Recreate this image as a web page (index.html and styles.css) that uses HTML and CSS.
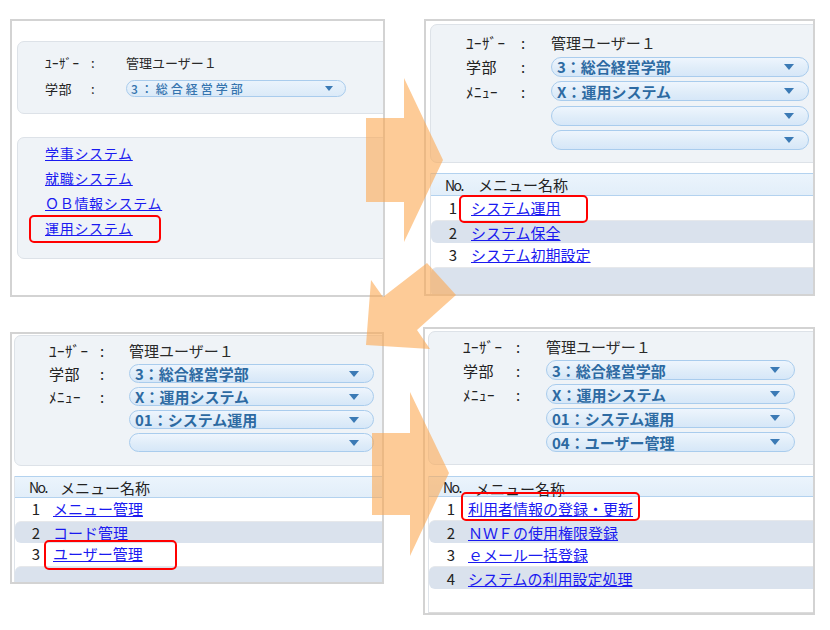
FILE: index.html
```html
<!DOCTYPE html>
<html lang="ja">
<head>
<meta charset="utf-8">
<title>メニュー遷移</title>
<link rel="stylesheet" href="styles.css">
</head>
<body>
<div class="page">
  <div class="band band-top">
    <!-- Panel 1 -->
    <div class="panel p1">
      <div class="card info">
        <span class="lbl">ﾕｰｻﾞｰ</span><span class="colon">:</span><span class="val">管理ユーザー１</span>
        <span class="lbl">学部</span><span class="colon">:</span><div class="sel"><span>3：総合経営学部</span><i class="caret"></i></div>
      </div>
      <div class="card links">
        <a href="#">学事システム</a>
        <a href="#">就職システム</a>
        <a href="#">ＯＢ情報システム</a>
        <span class="hl"><a href="#">運用システム</a></span>
      </div>
    </div>
    <!-- Panel 2 -->
    <div class="panel p2">
      <div class="card info">
        <span class="lbl">ﾕｰｻﾞｰ</span><span class="colon">:</span><span class="val">管理ユーザー１</span>
        <span class="lbl">学部</span><span class="colon">:</span><div class="sel"><span>3：総合経営学部</span><i class="caret"></i></div>
        <span class="lbl">ﾒﾆｭｰ</span><span class="colon">:</span><div class="sel"><span>X：運用システム</span><i class="caret"></i></div>
        <span></span><span></span><div class="sel"><span></span><i class="caret"></i></div>
        <span></span><span></span><div class="sel"><span></span><i class="caret"></i></div>
      </div>
      <div class="tbl">
        <div class="th"><span class="no">No.</span><span>メニュー名称</span></div>
        <div class="tr"><span class="num">1</span><span class="cell"><span class="hl"><a href="#">システム運用</a></span></span></div>
        <div class="tr alt"><span class="num">2</span><span class="cell"><a href="#">システム保全</a></span></div>
        <div class="tr"><span class="num">3</span><span class="cell"><a href="#">システム初期設定</a></span></div>
        <div class="tr alt"><span class="num"></span><span class="cell"></span></div>
      </div>
    </div>
  </div>

  <div class="band band-bottom">
    <!-- Panel 3 -->
    <div class="panel p3">
      <div class="card info">
        <span class="lbl">ﾕｰｻﾞｰ</span><span class="colon">:</span><span class="val">管理ユーザー１</span>
        <span class="lbl">学部</span><span class="colon">:</span><div class="sel"><span>3：総合経営学部</span><i class="caret"></i></div>
        <span class="lbl">ﾒﾆｭｰ</span><span class="colon">:</span><div class="sel"><span>X：運用システム</span><i class="caret"></i></div>
        <span></span><span></span><div class="sel"><span>01：システム運用</span><i class="caret"></i></div>
        <span></span><span></span><div class="sel"><span></span><i class="caret"></i></div>
      </div>
      <div class="tbl">
        <div class="th"><span class="no">No.</span><span>メニュー名称</span></div>
        <div class="tr"><span class="num">1</span><span class="cell"><a href="#">メニュー管理</a></span></div>
        <div class="tr alt"><span class="num">2</span><span class="cell"><a href="#">コード管理</a></span></div>
        <div class="tr"><span class="num">3</span><span class="cell"><span class="hl"><a href="#">ユーザー管理</a></span></span></div>
        <div class="tr alt"><span class="num"></span><span class="cell"></span></div>
      </div>
    </div>
    <!-- Panel 4 -->
    <div class="panel p4">
      <div class="card info">
        <span class="lbl">ﾕｰｻﾞｰ</span><span class="colon">:</span><span class="val">管理ユーザー１</span>
        <span class="lbl">学部</span><span class="colon">:</span><div class="sel"><span>3：総合経営学部</span><i class="caret"></i></div>
        <span class="lbl">ﾒﾆｭｰ</span><span class="colon">:</span><div class="sel"><span>X：運用システム</span><i class="caret"></i></div>
        <span></span><span></span><div class="sel"><span>01：システム運用</span><i class="caret"></i></div>
        <span></span><span></span><div class="sel"><span>04：ユーザー管理</span><i class="caret"></i></div>
      </div>
      <div class="tbl">
        <div class="th"><span class="no">No.</span><span class="thname">メニュー名称</span></div>
        <div class="tr"><span class="num">1</span><span class="cell"><span class="hl"><a href="#">利用者情報の登録・更新</a></span></span></div>
        <div class="tr alt"><span class="num">2</span><span class="cell"><a href="#">ＮＷＦの使用権限登録</a></span></div>
        <div class="tr"><span class="num">3</span><span class="cell"><a href="#">ｅメール一括登録</a></span></div>
        <div class="tr alt"><span class="num">4</span><span class="cell"><a href="#">システムの利用設定処理</a></span></div>
        <div class="tr empty"><span class="num"></span><span class="cell"></span></div>
      </div>
    </div>
  </div>
</div>

<svg class="arrows" width="830" height="630" viewBox="0 0 830 630" aria-hidden="true">
  <polygon points="366,118 404,118 404,78 443,160 404,242 404,202 366,202"/>
  <polygon points="366,345 371,280 383,297 427,263 456,295 417,330 430,349"/>
  <polygon points="372,433 410,433 410,392 449,473 410,556 410,515 372,515"/>
</svg>
</body>
</html>
```

FILE: styles.css
```css
* { box-sizing: border-box; }

html, body {
  margin: 0;
  padding: 0;
}

body {
  width: 830px;
  height: 630px;
  position: relative;
  overflow: hidden;
  background: #ffffff;
  font-family: "Noto Sans CJK JP", "Noto Sans", sans-serif;
  color: #222;
}

.page {
  display: flex;
  flex-direction: column;
  padding-top: 19px;
}

.band {
  display: flex;
  align-items: flex-start;
  padding-left: 10px;
  gap: 39px;
}

.band-bottom {
  margin-top: 30px;
}

.panel {
  border: 2px solid #d3d3d3;
  background: #fff;
  overflow: hidden;
}

.p1 { width: 375px; height: 278px; padding: 20px 0 0 5px; }
.p2 { width: 391px; height: 277px; padding: 3px 0 0 4px; }
.p3 { width: 374px; height: 252px; padding: 1px 0 0 2px; margin-top: 5px; }
.p4 { width: 392px; height: 288px; padding: 2px 0 0 3px; }

/* ---------- cards ---------- */
.card {
  background: #eff3f7;
  border: 1px solid #dde2e8;
  border-radius: 7px;
  margin-right: -14px;
}

.info {
  display: grid;
  align-items: center;
}

.lbl, .colon, .val {
  font-size: 15px;
  line-height: 1;
  color: #222;
  white-space: nowrap;
}

.lbl { letter-spacing: 0.5px; }

.val { color: #2a2a2a; }

.sel {
  height: 100%;
  display: flex;
  align-items: center;
  justify-content: space-between;
  padding: 0 14px 0 5px;
  border: 1px solid #a9cced;
  border-radius: 10px;
  background: linear-gradient(#eef5fd 0%, #e0edf9 55%, #d6e7f8 100%);
  color: #2d6aa2;
  font-size: 15px;
  font-weight: 700;
  line-height: 1;
  white-space: nowrap;
}

.caret {
  width: 0;
  height: 0;
  border-left: 5px solid transparent;
  border-right: 5px solid transparent;
  border-top: 6px solid #3b7ab5;
}

/* Panel 1 */
.p1 .info {
  padding: 12px 0 16px 27px;
  grid-template-columns: 46px 35px 220px;
  grid-auto-rows: 17px;
  row-gap: 9px;
}
.p1 .lbl, .p1 .colon, .p1 .val { font-size: 13px; }
.p1 .sel {
  font-size: 12px;
  font-weight: 500;
  letter-spacing: 3px;
  color: #3574ae;
  border-radius: 9px;
  padding: 0 12px 0 4px;
  background: linear-gradient(#eaf3fc, #dbeaf8);
}
.p1 .caret { border-left-width: 4px; border-right-width: 4px; border-top-width: 5px; }

.p1 .links {
  margin-top: 23px;
  padding: 3px 0 17px 27px;
  display: flex;
  flex-direction: column;
  align-items: flex-start;
}
.p1 .links a,
.p1 .links .hl {
  display: block;
  line-height: 25px;
  font-size: 14px;
  letter-spacing: 0.7px;
}

/* Panel 2 */
.p2 .info {
  padding: 7px 0 12px 35px;
  grid-template-columns: 55px 30px 258px;
  grid-auto-rows: 20px;
  row-gap: 4.5px;
}

/* Panel 3 */
.p3 .info {
  padding: 5px 0 13px 34px;
  grid-template-columns: 51px 29px 245px;
  grid-auto-rows: 19px;
  row-gap: 4px;
}

/* Panel 4 */
.p4 .info {
  padding: 4px 0 12px 34px;
  grid-template-columns: 53px 30px 249px;
  grid-auto-rows: 20px;
  row-gap: 4px;
}

/* ---------- tables ---------- */
.tbl {
  margin-right: -14px;
  border-left: 1px solid #dfe4ea;
}

.th {
  display: grid;
  align-items: center;
  padding-left: 14px;
  background: linear-gradient(#ebf4fc, #e2eef9);
  border-top: 1px solid #b3d2ef;
  border-bottom: 1px solid #b3d2ef;
  font-size: 15px;
  line-height: 1;
  color: #222;
}

.no {
  font-size: 14px;
  letter-spacing: -1.5px;
}

.tr {
  display: grid;
  align-items: center;
  font-size: 15px;
  background: #fff;
}

.tr.alt {
  background: #dae2ed;
  border-radius: 6px 0 0 6px;
  border-top: 1px solid #e6e8eb;
}

.num {
  text-align: right;
  color: #222;
}

.cell { white-space: nowrap; }

a {
  color: #1a1af0;
  text-decoration: underline;
}

.p2 .tbl { margin-top: 10px; }
.p2 .th { height: 23px; grid-template-columns: 33px 1fr; }
.p2 .tr { height: 23.5px; line-height: 23px; grid-template-columns: 26px 1fr; column-gap: 14px; }
.p2 .tr.alt:last-child { height: 30px; }

.p3 .tbl { margin-top: 10px; }
.p3 .th { height: 22px; grid-template-columns: 31px 1fr; }
.p3 .tr { height: 22.5px; line-height: 22px; grid-template-columns: 25px 1fr; column-gap: 13px; }
.p3 .tr.alt:last-child { height: 30px; }

.p4 .tbl { margin-top: 11px; border-bottom: 2px solid #dcdcdc; }
.p4 .th { height: 21px; grid-template-columns: 32px 1fr; }
.p4 .thname { position: relative; top: 2px; }
.p4 .tr { height: 23px; line-height: 23px; grid-template-columns: 26px 1fr; column-gap: 13px; }
.p4 .tr.empty { height: 23px; }

/* ---------- red highlight frames ---------- */
.hl {
  position: relative;
  display: inline-block;
}

.hl::after {
  content: "";
  position: absolute;
  border: 2.5px solid #ff0000;
  border-radius: 5px;
  z-index: 2;
}

.p1 .hl::after { left: -16px; right: -28px; top: -1px; bottom: -2px; }
.p2 .hl::after { left: -12px; right: -27px; top: -1px; bottom: -4px; }
.p3 .hl::after { left: -9px;  right: -34px; top: -3px; bottom: -5px; }
.p4 .hl::after { left: -7px;  right: -7px;  top: -5px; bottom: -1px; }

/* ---------- arrows overlay ---------- */
.arrows {
  position: absolute;
  left: 0;
  top: 0;
  pointer-events: none;
  z-index: 5;
}

.arrows polygon {
  fill: rgba(251, 168, 82, 0.6);
}
```
